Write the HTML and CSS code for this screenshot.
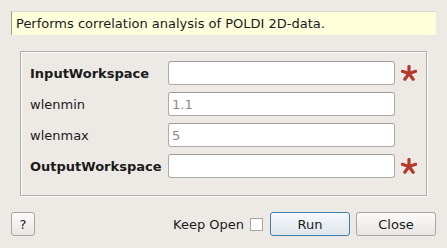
FILE: index.html
```html
<!DOCTYPE html>
<html lang="en">
<head>
  <meta charset="UTF-8">
  <title>PoldiAutoCorrelation</title>
  <link rel="stylesheet" href="styles.css">
</head>
<body>
  <div class="dialog">
    <div class="description">Performs correlation analysis of POLDI 2D-data.</div>

    <div class="group">
      <div class="prop-row">
        <label class="prop-label mandatory">InputWorkspace</label>
        <input class="prop-input" type="text">
        <span class="star">
          <svg width="16" height="16" viewBox="0 0 16 16">
            <g stroke="#b5392a" stroke-width="3.2" stroke-linecap="round">
              <line x1="8" y1="8.5" x2="8" y2="1.5"/>
              <line x1="8" y1="8.5" x2="14.7" y2="6.3"/>
              <line x1="8" y1="8.5" x2="12.2" y2="14.2"/>
              <line x1="8" y1="8.5" x2="3.8" y2="14.2"/>
              <line x1="8" y1="8.5" x2="1.3" y2="6.3"/>
            </g>
          </svg>
        </span>
      </div>
      <div class="prop-row">
        <label class="prop-label">wlenmin</label>
        <input class="prop-input" type="text" placeholder="1.1">
        <span class="star"></span>
      </div>
      <div class="prop-row">
        <label class="prop-label">wlenmax</label>
        <input class="prop-input" type="text" placeholder="5">
        <span class="star"></span>
      </div>
      <div class="prop-row">
        <label class="prop-label mandatory">OutputWorkspace</label>
        <input class="prop-input" type="text">
        <span class="star">
          <svg width="16" height="16" viewBox="0 0 16 16">
            <g stroke="#b5392a" stroke-width="3.2" stroke-linecap="round">
              <line x1="8" y1="8.5" x2="8" y2="1.5"/>
              <line x1="8" y1="8.5" x2="14.7" y2="6.3"/>
              <line x1="8" y1="8.5" x2="12.2" y2="14.2"/>
              <line x1="8" y1="8.5" x2="3.8" y2="14.2"/>
              <line x1="8" y1="8.5" x2="1.3" y2="6.3"/>
            </g>
          </svg>
        </span>
      </div>
    </div>

    <div class="buttons">
      <button class="btn help">?</button>
      <div class="spacer"></div>
      <label class="keep-open">Keep Open <span class="check"></span></label>
      <button class="btn run">Run</button>
      <button class="btn close">Close</button>
    </div>
  </div>
</body>
</html>
```

FILE: styles.css
```css
body {
  margin: 0;
  background: #edeae6;
  font-family: "DejaVu Sans", sans-serif;
  font-size: 13px;
  color: #1a1a1a;
  overflow: hidden;
}

.dialog {
  padding: 11px 11px 0 11px;
  width: 447px;
  box-sizing: border-box;
}

.description {
  height: 24px;
  box-sizing: border-box;
  background: #ffffdc;
  border-left: 1px solid #9a9a94;
  border-top: 1px solid #dcdad0;
  padding: 3px 0 0 4px;
  line-height: 18px;
}

.group {
  margin: 16px 9px 0 9px;
  height: 145px;
  box-sizing: border-box;
  border: 1px solid #b0aca8;
  box-shadow: inset 1px 1px 0 #ffffff, 1px 1px 0 #ffffff;
  padding: 9px 9px 0 9px;
  display: flex;
  flex-direction: column;
  gap: 7px;
}

.prop-row {
  display: flex;
  align-items: center;
  height: 24px;
}

.prop-label {
  width: 138px;
  flex: none;
}

.prop-label.mandatory {
  font-weight: bold;
}

.prop-input {
  width: 227px;
  height: 24px;
  box-sizing: border-box;
  border: 1px solid #aeaba7;
  border-top-color: #a09d99;
  border-radius: 3px;
  background: #ffffff;
  font-family: inherit;
  font-size: 13px;
  padding: 0 3px;
  margin: 0;
  outline: none;
}

.prop-input::placeholder {
  color: #8a8a8a;
}

.star {
  width: 16px;
  height: 16px;
  margin-left: 6px;
  display: flex;
}

.buttons {
  display: flex;
  align-items: center;
  margin-top: 16px;
  height: 24px;
}

.spacer {
  flex: 1;
}

.btn {
  height: 24px;
  box-sizing: border-box;
  border: 1px solid #a8a5a1;
  border-radius: 3px;
  background: linear-gradient(to bottom, #fbfaf9, #e9e7e4);
  font-family: inherit;
  font-size: 13px;
  color: #1a1a1a;
  padding: 0;
  margin: 0;
}

.help {
  width: 24px;
}

.run {
  width: 80px;
  margin-left: 7px;
  border-color: #3f7fae;
  background: linear-gradient(to bottom, #f6f8fa, #dfe6ec);
}

.close {
  width: 80px;
  margin-left: 6px;
}

.keep-open {
  display: flex;
  align-items: center;
  gap: 6px;
}

.check {
  width: 13px;
  height: 13px;
  box-sizing: border-box;
  border: 1px solid #a8a5a1;
  background: #ffffff;
}
```
